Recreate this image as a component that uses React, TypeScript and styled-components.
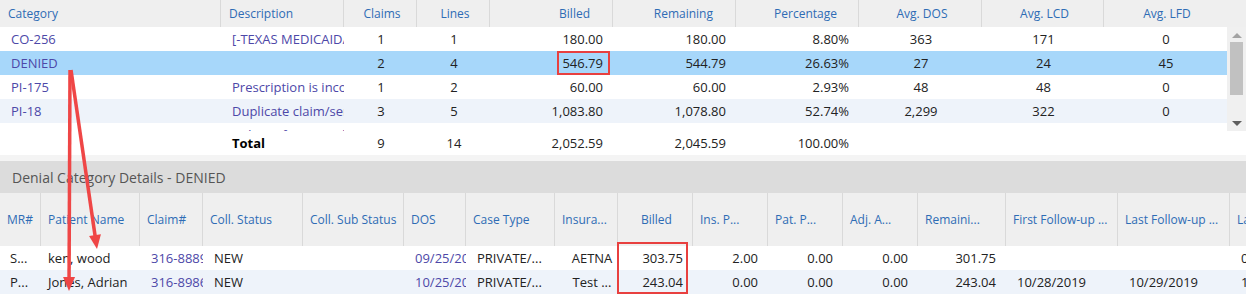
import { createGlobalStyle, styled } from 'styled-components';

const GlobalStyle = createGlobalStyle`
  body {
    margin: 0;
    padding: 0;
    background: #ffffff;
    font-family: 'Open Sans', 'Noto Sans', sans-serif;
    overflow: hidden;
  }
`;

const Page = styled.div`
  position: relative;
  width: 1246px;
  height: 295px;
  overflow: hidden;
  background: #ffffff;
`;

const Row = styled.div<{ $h: number; $bg?: string }>`
  display: flex;
  height: ${(p) => p.$h}px;
  background: ${(p) => p.$bg || 'transparent'};
`;

const HeadCell = styled.div<{ $w: number; $align?: string; $pl?: number; $pr?: number; $last?: boolean }>`
  flex: 0 0 ${(p) => p.$w}px;
  box-sizing: border-box;
  display: flex;
  align-items: center;
  justify-content: ${(p) => p.$align || 'flex-start'};
  padding-left: ${(p) => p.$pl ?? 8}px;
  padding-right: ${(p) => p.$pr ?? 4}px;
  border-right: 1px solid ${(p) => (p.$last ? 'transparent' : '#d9d9d9')};
  font-size: 12px;
  color: #2e6cb5;
  white-space: nowrap;
  overflow: hidden;
`;

const Cell = styled.div<{ $w: number; $align?: string; $pl?: number; $pr?: number; $color?: string; $bold?: boolean }>`
  flex: 0 0 ${(p) => p.$w}px;
  box-sizing: border-box;
  display: flex;
  align-items: center;
  justify-content: ${(p) => p.$align || 'flex-start'};
  padding-left: ${(p) => p.$pl ?? 11}px;
  padding-right: ${(p) => p.$pr ?? 10}px;
  font-size: 13px;
  font-weight: ${(p) => (p.$bold ? 700 : 400)};
  color: ${(p) => p.$color || '#222222'};
  white-space: nowrap;
  overflow: hidden;
`;

const Filler = styled.div`
  flex: 1 1 auto;
`;

const BodyWrap = styled.div`
  display: flex;
  height: 104px;
`;

const Rows = styled.div`
  width: 1227px;
  height: 104px;
  overflow: hidden;
`;

const ScrollBar = styled.div`
  width: 19px;
  background: #f0f0f0;
  display: flex;
  flex-direction: column;
  align-items: center;
`;

const Arrow = styled.div<{ $up?: boolean }>`
  width: 0;
  height: 0;
  margin: ${(p) => (p.$up ? '6px 0 4px' : '0 0 5px')};
  border-left: 5px solid transparent;
  border-right: 5px solid transparent;
  ${(p) =>
    p.$up ? 'border-bottom: 5px solid #a3a3a3;' : 'border-top: 5px solid #5f5f5f;'}
`;

const Track = styled.div`
  flex: 1 1 auto;
  width: 13px;
`;

const Thumb = styled.div`
  width: 13px;
  height: 53px;
  background: #c1c1c1;
`;

const Strip = styled.div`
  height: 6px;
  background: #f4f4f4;
`;

const SectionTitle = styled.div`
  height: 32px;
  background: #dcdcdc;
  display: flex;
  align-items: center;
  padding-left: 12px;
  font-size: 14px;
  color: #555555;
`;

const Overlay = styled.svg`
  position: absolute;
  left: 0;
  top: 0;
  pointer-events: none;
`;

const LINK = '#4d48a8';
const HEAD_BG = '#efefef';
const SEL_BG = '#a7d7fa';
const ALT_BG = '#eef3fa';

type Col = { w: number; align: string; hAlign: string; hPr?: number; link?: boolean };

const topCols: Col[] = [
  { w: 221, align: 'flex-start', hAlign: 'flex-start', link: true },
  { w: 123, align: 'flex-start', hAlign: 'flex-start', link: true },
  { w: 73, align: 'center', hAlign: 'center' },
  { w: 73, align: 'center', hAlign: 'center' },
  { w: 123, align: 'flex-end', hAlign: 'flex-end', hPr: 22 },
  { w: 123, align: 'flex-end', hAlign: 'flex-end', hPr: 22 },
  { w: 123, align: 'flex-end', hAlign: 'flex-end', hPr: 21 },
  { w: 123, align: 'center', hAlign: 'center' },
  { w: 122, align: 'center', hAlign: 'center' },
  { w: 123, align: 'center', hAlign: 'center' },
];

const topHeads = ['Category', 'Description', 'Claims', 'Lines', 'Billed', 'Remaining', 'Percentage', 'Avg. DOS', 'Avg. LCD', 'Avg. LFD'];

const topRows = [
  ['CO-256', '[-TEXAS MEDICAID/HEALTHY TEXAS WOMEN', '1', '1', '180.00', '180.00', '8.80%', '363', '171', '0'],
  ['DENIED', '', '2', '4', '546.79', '544.79', '26.63%', '27', '24', '45'],
  ['PI-175', 'Prescription is incomplete', '1', '2', '60.00', '60.00', '2.93%', '48', '48', '0'],
  ['PI-18', 'Duplicate claim/service', '3', '5', '1,083.80', '1,078.80', '52.74%', '2,299', '322', '0'],
  ['PR-184', 'Indemnification adjustment', '1', '1', '50.00', '50.00', '9.44%', '96', '96', '0'],
];

const totals = ['', 'Total', '9', '14', '2,052.59', '2,045.59', '100.00%', '', '', ''];

const detailCols: Col[] = [
  { w: 41, align: 'flex-start', hAlign: 'flex-start' },
  { w: 99, align: 'flex-start', hAlign: 'flex-start' },
  { w: 63, align: 'flex-start', hAlign: 'flex-start', link: true },
  { w: 100, align: 'flex-start', hAlign: 'flex-start' },
  { w: 101, align: 'flex-start', hAlign: 'flex-start' },
  { w: 62, align: 'flex-start', hAlign: 'flex-start', link: true },
  { w: 89, align: 'flex-start', hAlign: 'flex-start' },
  { w: 63, align: 'center', hAlign: 'flex-start' },
  { w: 75, align: 'flex-end', hAlign: 'center' },
  { w: 75, align: 'flex-end', hAlign: 'flex-start' },
  { w: 75, align: 'flex-end', hAlign: 'flex-start' },
  { w: 75, align: 'flex-end', hAlign: 'flex-start' },
  { w: 88, align: 'flex-end', hAlign: 'flex-start' },
  { w: 112, align: 'flex-start', hAlign: 'flex-start' },
  { w: 112, align: 'flex-start', hAlign: 'flex-start' },
  { w: 100, align: 'flex-start', hAlign: 'flex-start' },
];

const detailHeads = [
  'MR#', 'Patient Name', 'Claim#', 'Coll. Status', 'Coll. Sub Status', 'DOS', 'Case Type', 'Insura...', 'Billed',
  'Ins. P...', 'Pat. P...', 'Adj. A...', 'Remaini...', 'First Follow-up ...', 'Last Follow-up ...', 'Last Contact',
];

const detailRows = [
  ['S...', 'ken, wood', '316-88896', 'NEW', '', '09/25/2019', 'PRIVATE/...', 'AETNA', '303.75', '2.00', '0.00', '0.00', '301.75', '', '', '09/30/2019'],
  ['P...', 'Jones, Adrian', '316-89862', 'NEW', '', '10/25/2019', 'PRIVATE/...', 'Test ...', '243.04', '0.00', '0.00', '0.00', '243.04', '10/28/2019', '10/29/2019', '11/01/2019'],
];

function cellPad(i: number, detail: boolean) {
  if (!detail) return 11;
  if (i === 0) return 10;
  if (i === 1) return 7;
  return 11;
}

// arrow line stops short of the tip so the head stays sharp
function arrowHead(x1: number, y1: number, x2: number, y2: number) {
  const dx = x2 - x1;
  const dy = y2 - y1;
  const len = Math.sqrt(dx * dx + dy * dy);
  const ux = dx / len;
  const uy = dy / len;
  const bx = x2 - ux * 14;
  const by = y2 - uy * 14;
  const px = -uy * 6;
  const py = ux * 6;
  return {
    line: { x2: bx + ux * 2, y2: by + uy * 2 },
    pts: `${x2},${y2} ${bx + px},${by + py} ${bx - px},${by - py}`,
  };
}

function Annotations() {
  const a1 = arrowHead(70, 70, 69, 291);
  const a2 = arrowHead(71, 70, 97, 249);
  const red = '#ef4646';
  return (
    <Overlay width={1246} height={295} viewBox="0 0 1246 295">
      <line x1={70} y1={70} x2={a1.line.x2} y2={a1.line.y2} stroke={red} strokeWidth={3.5} />
      <polygon points={a1.pts} fill={red} />
      <line x1={71} y1={70} x2={a2.line.x2} y2={a2.line.y2} stroke={red} strokeWidth={3.5} />
      <polygon points={a2.pts} fill={red} />
      <rect x={558} y={52} width={51} height={22} fill="none" stroke="#e8403f" strokeWidth={2} />
      <rect x={618} y={243} width={69} height={50} fill="none" stroke="#e8403f" strokeWidth={2} />
    </Overlay>
  );
}

export default function App() {
  return (
    <Page>
      <GlobalStyle />

      <Row $h={27} $bg={HEAD_BG}>
        {topHeads.map((h, i) => (
          <HeadCell
            key={h}
            $w={topCols[i].w}
            $align={topCols[i].hAlign}
            $pr={topCols[i].hPr}
            $last={i === topHeads.length - 1}
          >
            {h}
          </HeadCell>
        ))}
        <Filler />
      </Row>

      <BodyWrap>
        <Rows>
          {topRows.map((r, ri) => (
            <Row key={ri} $h={24} $bg={ri === 1 ? SEL_BG : ri === 3 ? ALT_BG : '#ffffff'}>
              {r.map((v, i) => (
                <Cell
                  key={i}
                  $w={topCols[i].w}
                  $align={topCols[i].align}
                  $pl={cellPad(i, false)}
                  $pr={i < 2 ? 0 : 10}
                  $color={topCols[i].link ? LINK : undefined}
                >
                  {v}
                </Cell>
              ))}
            </Row>
          ))}
        </Rows>
        <ScrollBar>
          <Arrow $up />
          <Track>
            <Thumb />
          </Track>
          <Arrow />
        </ScrollBar>
      </BodyWrap>

      <Row $h={24} $bg="#ffffff">
        {totals.map((v, i) => (
          <Cell key={i} $w={topCols[i].w} $align={topCols[i].align} $pr={i < 2 ? 0 : 10} $bold={i === 1} $color={i === 1 ? '#000000' : undefined}>
            {v}
          </Cell>
        ))}
      </Row>

      <Strip />
      <SectionTitle>Denial Category Details - DENIED</SectionTitle>

      <Row $h={53} $bg={HEAD_BG}>
        {detailHeads.map((h, i) => (
          <HeadCell key={h} $w={detailCols[i].w} $align={detailCols[i].hAlign} $pl={7}>
            {h}
          </HeadCell>
        ))}
      </Row>

      {detailRows.map((r, ri) => (
        <Row key={ri} $h={24} $bg={ri === 1 ? ALT_BG : '#ffffff'}>
          {r.map((v, i) => (
            <Cell
              key={i}
              $w={detailCols[i].w}
              $align={detailCols[i].align}
              $pl={cellPad(i, true)}
              $pr={detailCols[i].align === 'flex-end' ? 10 : 0}
              $color={detailCols[i].link ? LINK : undefined}
            >
              {v}
            </Cell>
          ))}
        </Row>
      ))}

      <Annotations />
    </Page>
  );
}
